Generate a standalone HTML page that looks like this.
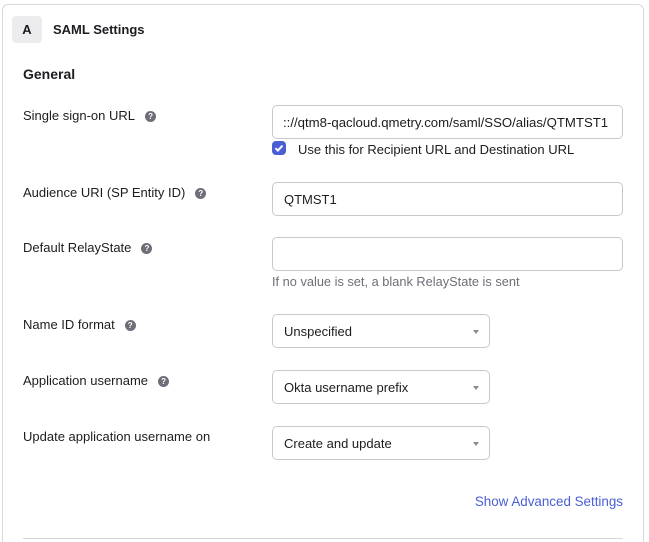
<!DOCTYPE html>
<html style="overflow:hidden;height:542px"><head><style>
body{margin:0;width:649px;height:542px;background:#fff;font-family:"Liberation Sans",Arial,sans-serif;color:#1d1d21;position:relative;overflow:hidden}
.card{position:absolute;left:2px;top:4px;width:640px;height:545px;border:1px solid #d7d7dc;border-radius:6px}
.abs{position:absolute}
.lbl{position:absolute;left:23px;font-size:13px;color:#1d1d21}
.q{display:inline-block;width:11px;height:11px;border-radius:50%;background:#6e6e78;color:#fff;font-size:8px;font-weight:bold;text-align:center;line-height:11px;margin-left:10px;vertical-align:1px}
.in{position:absolute;left:272px;border:1px solid #c8c8cf;border-radius:5px;box-sizing:border-box;font-size:13px;padding-left:11px;display:flex;align-items:center;background:#fff;color:#1d1d21}
.sel{width:218px;height:34px}
.sel:after{content:"";position:absolute;right:10px;top:15px;border-left:3.5px solid transparent;border-right:3.5px solid transparent;border-top:4px solid #8a8a92}
</style></head><body>
<div class="card"></div>
<div class="abs" style="left:12px;top:16px;width:30px;height:27px;background:#ececee;border-radius:4px;font-size:13px;font-weight:bold;text-align:center;line-height:27px">A</div>
<div class="abs" style="left:53px;top:22px;font-size:13px;font-weight:bold">SAML Settings</div>
<div class="abs" style="left:23px;top:66px;font-size:14px;font-weight:bold">General</div>

<div class="lbl" style="top:108px">Single sign-on URL<span class="q">?</span></div>
<div class="in" style="top:105px;width:351px;height:34px;overflow:hidden;white-space:nowrap;padding-left:10px;font-size:13.2px">:://qtm8-qacloud.qmetry.com/saml/SSO/alias/QTMTST1</div>
<div class="abs" style="left:272px;top:141px;width:14px;height:14px;border-radius:4px;background:#4a5ed6"><svg width="14" height="14" viewBox="0 0 14 14"><path d="M3.5 7.2l2.4 2.4 4.6-5" stroke="#fff" stroke-width="2" fill="none"/></svg></div>
<div class="abs" style="left:298px;top:142px;font-size:13px">Use this for Recipient URL and Destination URL</div>

<div class="lbl" style="top:185px">Audience URI (SP Entity ID)<span class="q">?</span></div>
<div class="in" style="top:182px;width:351px;height:34px">QTMST1</div>

<div class="lbl" style="top:240px">Default RelayState<span class="q">?</span></div>
<div class="in" style="top:237px;width:351px;height:34px"></div>
<div class="abs" style="left:272px;top:274px;font-size:12.8px;color:#6e6e78">If no value is set, a blank RelayState is sent</div>

<div class="lbl" style="top:317px">Name ID format<span class="q">?</span></div>
<div class="in sel" style="top:314px">Unspecified</div>

<div class="lbl" style="top:373px">Application username<span class="q">?</span></div>
<div class="in sel" style="top:370px">Okta username prefix</div>

<div class="lbl" style="top:429px">Update application username on</div>
<div class="in sel" style="top:426px">Create and update</div>

<div class="abs" style="right:26px;top:494px;font-size:13.4px;color:#4a5ed6">Show Advanced Settings</div>
<div class="abs" style="left:23px;top:538px;width:600px;height:1px;background:#d7d7dc"></div>
</body></html>
